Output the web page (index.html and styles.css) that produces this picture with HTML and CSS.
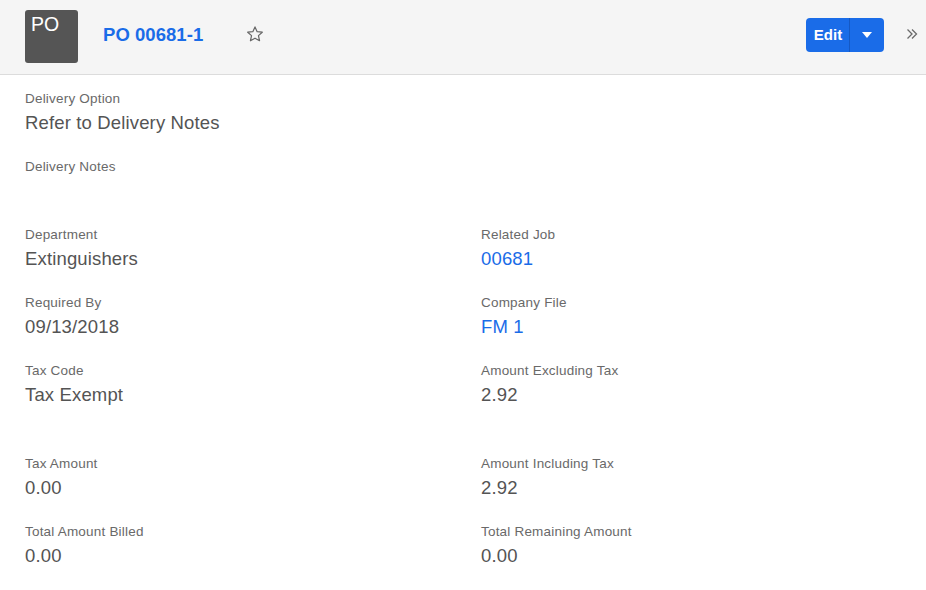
FILE: index.html
```html
<!DOCTYPE html>
<html lang="en">
<head>
<meta charset="utf-8">
<title>PO 00681-1</title>
<link rel="stylesheet" href="styles.css">
</head>
<body>
<header class="page-header">
  <div class="avatar">PO</div>
  <a class="title" href="#">PO 00681-1</a>
  <svg class="star" width="18" height="18" viewBox="0 1 18 18" aria-hidden="true"><path d="M9 1.9l2.15 4.75 5.15.55-3.85 3.45 1.1 5.1L9 13.15 4.45 15.75l1.1-5.1L1.7 7.2l5.15-.55z" fill="none" stroke="#666" stroke-width="1.2" stroke-linejoin="round"/></svg>
  <div class="actions">
    <div class="edit-group">
      <span class="edit">Edit</span>
      <span class="caret-box"><span class="caret"></span></span>
    </div>
    <svg class="more" width="12" height="12" viewBox="0 1 12 12" aria-hidden="true"><path d="M1.5 1.5L6 6l-4.500 4.500M6 1.500L10.500 6 6 10.500" fill="none" stroke="#6b6b6b" stroke-width="1.300"/></svg>
  </div>
</header>
<main class="details">
  <section class="single">
    <div class="field"><div class="label">Delivery Option</div><div class="value">Refer to Delivery Notes</div></div>
    <div class="field"><div class="label">Delivery Notes</div><div class="value"></div></div>
  </section>
  <section class="grid">
    <div class="field"><div class="label">Department</div><div class="value">Extinguishers</div></div>
    <div class="field"><div class="label">Related Job</div><div class="value"><a href="#">00681</a></div></div>
    <div class="field"><div class="label">Required By</div><div class="value">09/13/2018</div></div>
    <div class="field"><div class="label">Company File</div><div class="value"><a href="#">FM 1</a></div></div>
    <div class="field tall"><div class="label">Tax Code</div><div class="value">Tax Exempt</div></div>
    <div class="field tall"><div class="label">Amount Excluding Tax</div><div class="value">2.92</div></div>
    <div class="field"><div class="label">Tax Amount</div><div class="value">0.00</div></div>
    <div class="field"><div class="label">Amount Including Tax</div><div class="value">2.92</div></div>
    <div class="field"><div class="label">Total Amount Billed</div><div class="value">0.00</div></div>
    <div class="field"><div class="label">Total Remaining Amount</div><div class="value">0.00</div></div>
  </section>
</main>
</body>
</html>
```
FILE: styles.css
```css
* { box-sizing: border-box; }
html, body { margin: 0; height: 100%; }
body {
  background: #fff;
  color: #545454;
  font-family: "Liberation Sans", Arial, sans-serif;
  overflow: hidden;
}
a { color: #1a6ce8; text-decoration: none; }
.page-header {
  height: 75px;
  display: flex;
  align-items: center;
  padding: 0 8px 4px 25px;
  background: #f5f5f5;
  border-bottom: 1px solid #dcdcdc;
}
.avatar {
  width: 53px;
  height: 53px;
  margin-top: 3px;
  padding: 2px 0 0 6px;
  background: #555;
  border-radius: 3px;
  color: #fff;
  font-size: 19.5px;
  line-height: 24px;
}
.title {
  margin-left: 25px;
  font-size: 18.5px;
  font-weight: bold;
  letter-spacing: 0.05px;
}
.star { margin-left: 43px; }
.actions {
  margin-left: auto;
  display: flex;
  align-items: center;
  gap: 22px;
}
.edit-group {
  display: flex;
  width: 78px;
  height: 34px;
  background: #1a6ce8;
  border-radius: 4px;
  color: #fff;
  font-size: 15px;
  font-weight: bold;
}
.edit {
  width: 44px;
  padding-left: 1px;
  border-right: 1px solid #1559c4;
  text-align: center;
  line-height: 34px;
}
.caret-box {
  flex: 1;
  display: flex;
  align-items: center;
  justify-content: center;
}
.caret {
  border-left: 5px solid transparent;
  border-right: 5px solid transparent;
  border-top: 6px solid #fff;
}
.details { padding: 14px 25px 0; }
.field { height: 68px; }
.field.tall { height: 93px; }
.label {
  font-size: 13.5px;
  line-height: 20px;
  color: #696969;
  letter-spacing: 0.2px;
}
.value {
  font-size: 18.5px;
  line-height: 28px;
  min-height: 28px;
  letter-spacing: 0.15px;
}
.grid {
  display: grid;
  grid-template-columns: 456px 1fr;
}
```
